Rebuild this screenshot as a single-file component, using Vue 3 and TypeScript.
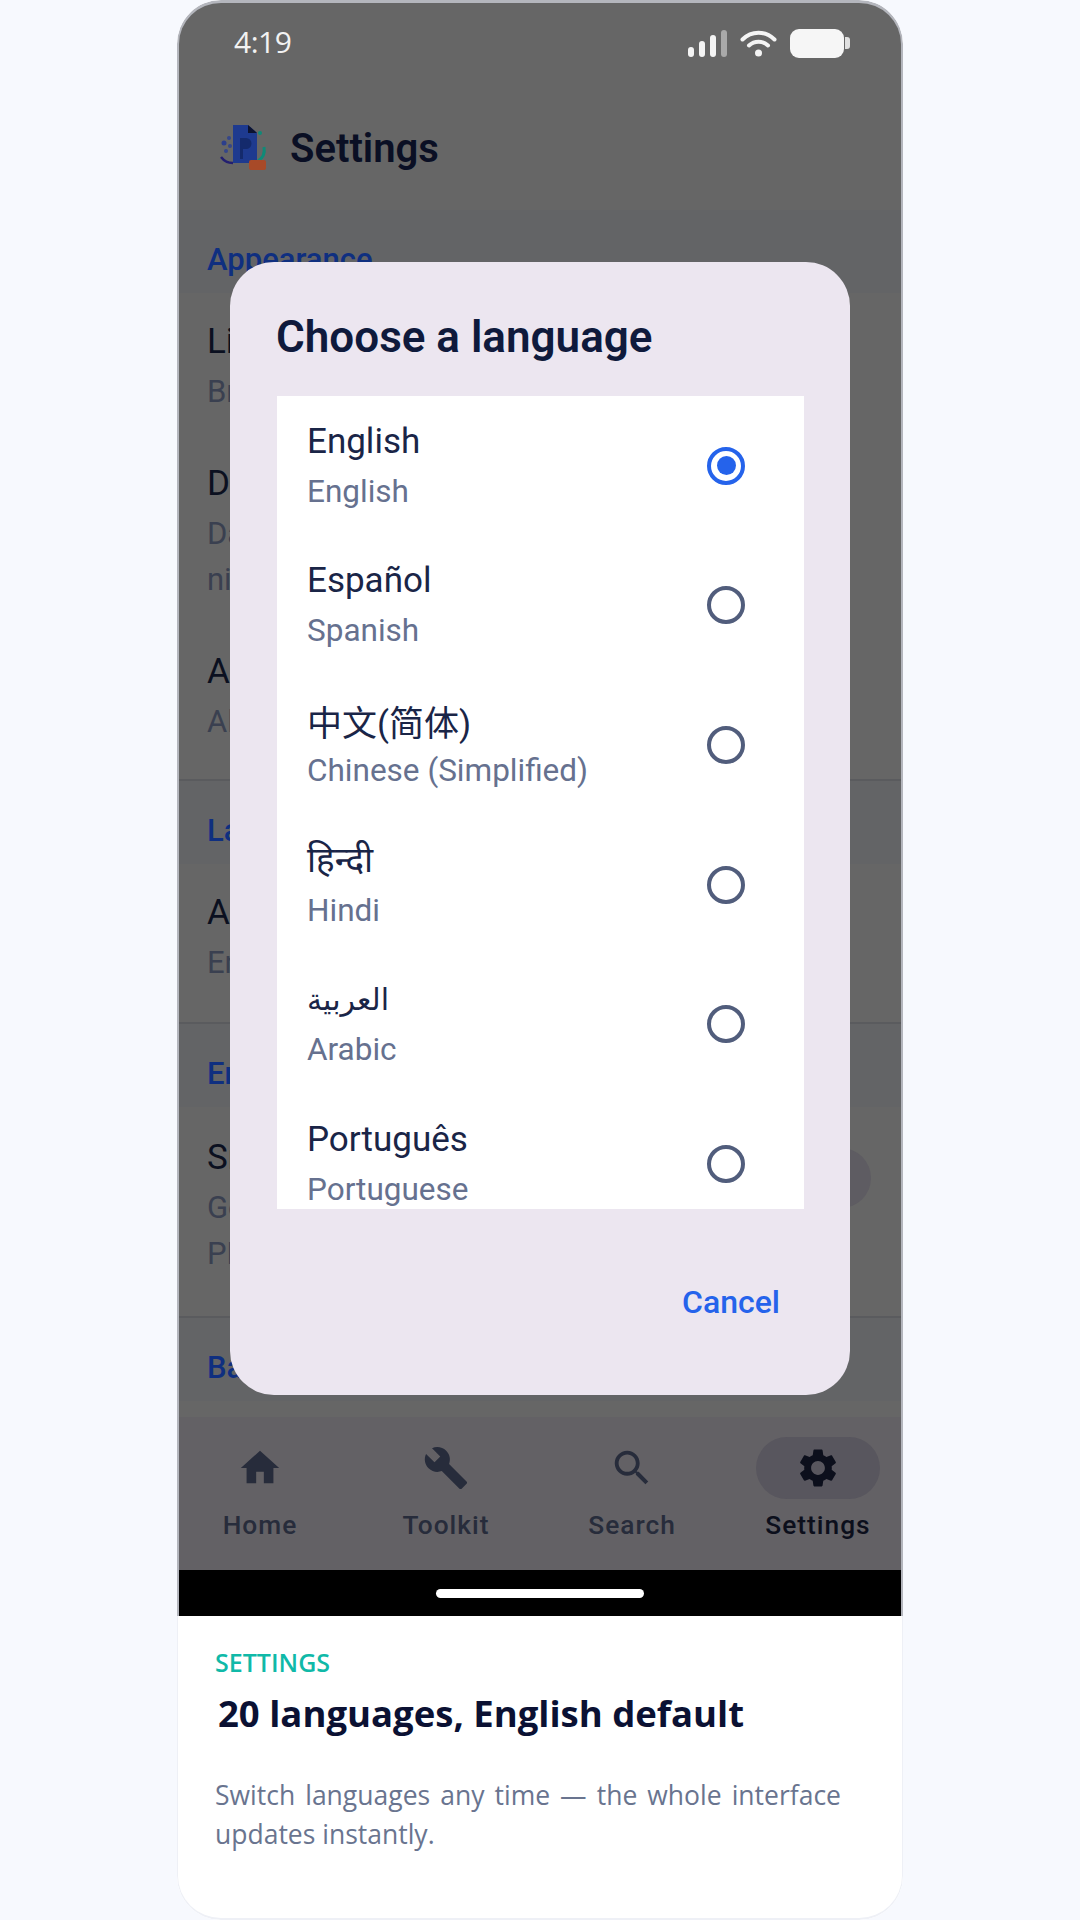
<template>
  <div class="page">
    <div class="phone">
      <div class="screen">
        <div class="status">
          <span class="time">4:19</span>
          <div class="status-icons">
            <svg width="39" height="27" viewBox="0 0 39 27">
              <rect x="0" y="17" width="6" height="10" rx="3" fill="#f4f4f4" />
              <rect x="11" y="11" width="6" height="16" rx="3" fill="#f4f4f4" />
              <rect x="22" y="5" width="6" height="22" rx="3" fill="#f4f4f4" />
              <rect x="33" y="0" width="6" height="27" rx="3" fill="#a9a9a9" />
            </svg>
            <svg width="37" height="27" viewBox="0 0 37 27" fill="none" stroke="#f4f4f4" stroke-width="4" stroke-linecap="round">
              <path d="M2.5 9.5C11.5 .5 25.500 .5 34.500 9.500" />
              <path d="M9 15.500C14.500 10.500 22.500 10.500 28 15.500" />
              <circle cx="18.500" cy="23" r="3.500" fill="#f4f4f4" stroke="none" />
            </svg>
            <div class="battery"></div>
          </div>
        </div>

        <header class="app-bar">
          <svg class="logo" width="50" height="46" viewBox="0 0 50 46">
            <path d="M13 1h15l9 8v30H13z" fill="#1e3a8f" />
            <path d="M28 1l9 8h-9z" fill="#0c1330" />
            <path d="M20 14h6a5 5 0 0 1 0 11h-3v10h-3z" fill="#142a6c" />
            <circle cx="9" cy="14" r="2" fill="#35468a" />
            <circle cx="4" cy="19" r="2.500" fill="#2c3f8c" />
            <circle cx="10" cy="22" r="2" fill="#35468a" />
            <circle cx="6" cy="27" r="2" fill="#35468a" />
            <path d="M1 33c3 4 7 6 12 6" fill="none" stroke="#231f70" stroke-width="2.500" />
            <path d="M44 23c1 6-1 11-6 14" fill="none" stroke="#0f8a78" stroke-width="3" />
            <circle cx="40" cy="9" r="2" fill="#0f8a78" />
            <rect x="29" y="36" width="17" height="10" rx="2" fill="#a84a28" />
          </svg>
          <span class="app-title">Settings</span>
        </header>

        <div class="content">
          <section v-for="section in sections" :key="section.title" class="section">
            <h3 class="section-title">{{ section.title }}</h3>
            <div
              v-for="row in section.rows"
              :key="row.title"
              class="row"
              :class="{ 'row-switch': row.toggle }"
            >
              <div>
                <div class="row-title">{{ row.title }}</div>
                <div class="row-sub">{{ row.sub }}</div>
              </div>
              <span v-if="row.toggle" class="switch"></span>
            </div>
          </section>
        </div>

        <nav class="nav">
          <div v-for="tab in tabs" :key="tab.label" class="tab" :class="{ active: tab.active }">
            <span class="tab-icon">
              <svg width="46" height="46" viewBox="0 0 24 24"><path :d="tab.icon" /></svg>
            </span>
            <span class="tab-label">{{ tab.label }}</span>
          </div>
        </nav>

        <div class="gesture"><span class="gesture-pill"></span></div>
      </div>

      <div class="caption">
        <div class="eyebrow">SETTINGS</div>
        <h2 class="caption-title">20 languages, English default</h2>
        <p class="caption-text">Switch languages any time — the whole interface updates instantly.</p>
      </div>

      <div class="dialog">
        <h2 class="dialog-title">Choose a language</h2>
        <div class="lang-list">
          <div v-for="(lang, i) in languages" :key="lang.en" class="lang">
            <div class="lang-text">
              <div class="lang-name" :class="lang.cls">{{ lang.name }}</div>
              <div class="lang-en">{{ lang.en }}</div>
            </div>
            <span class="radio" :class="{ checked: i === selected }"></span>
          </div>
        </div>
        <div class="dialog-actions">
          <span class="cancel">Cancel</span>
        </div>
      </div>
    </div>
  </div>
</template>

<script setup lang="ts">
import { ref } from "vue";

interface Row {
  title: string;
  sub: string;
  toggle?: boolean;
}

const selected = ref(0);

// everything behind the dialog is mostly covered, only the first letters show
const sections: { title: string; rows: Row[] }[] = [
  {
    title: "Appearance",
    rows: [
      { title: "Light", sub: "Bright theme" },
      { title: "Dark", sub: "Dark theme, easier on the eyes at\nnight" },
      { title: "Auto", sub: "Always follow the system" },
    ],
  },
  {
    title: "Language",
    rows: [{ title: "App language", sub: "English" }],
  },
  {
    title: "Engine",
    rows: [{ title: "Smart engine", sub: "Get the best results on every\nPDF", toggle: true }],
  },
  { title: "Backup", rows: [] },
];

const tabs = [
  { label: "Home", icon: "M10 20v-6h4v6h5v-8h3L12 3 2 12h3v8z" },
  {
    label: "Toolkit",
    icon: "M22.7 19l-9.1-9.1c.9-2.3.4-5-1.5-6.9-2-2-5-2.4-7.4-1.3L9 6 6 9 1.600 4.700C.4 7.100.9 10.100 2.900 12.100c1.900 1.900 4.600 2.400 6.900 1.500l9.100 9.100c.4.4 1 .4 1.400 0l2.300-2.300c.5-.4.5-1.100.1-1.400z",
  },
  {
    label: "Search",
    icon: "M15.500 14h-.79l-.28-.27C15.410 12.590 16 11.110 16 9.500 16 5.910 13.090 3 9.500 3S3 5.910 3 9.500 5.910 16 9.500 16c1.610 0 3.090-.59 4.230-1.570l.27.28v.79l5 4.990L20.490 19l-4.990-5zm-6 0C7.010 14 5 11.990 5 9.500S7.010 5 9.500 5 14 7.010 14 9.500 11.990 14 9.500 14z",
  },
  {
    label: "Settings",
    active: true,
    icon: "M19.140 12.940c.04-.3.06-.61.06-.94 0-.32-.02-.64-.07-.94l2.030-1.580c.18-.14.23-.41.12-.61l-1.920-3.320c-.12-.22-.37-.29-.59-.22l-2.390.96c-.5-.38-1.030-.7-1.620-.94l-.36-2.540c-.04-.24-.24-.41-.48-.41h-3.840c-.24 0-.43.17-.47.41l-.36 2.540c-.59.24-1.130.57-1.620.94l-2.390-.96c-.22-.08-.47 0-.59.22L2.740 8.870c-.12.21-.08.47.12.61l2.030 1.580c-.05.3-.09.63-.09.94s.02.64.07.94l-2.030 1.580c-.18.14-.23.41-.12.61l1.920 3.320c.12.22.37.29.59.22l2.390-.96c.5.38 1.030.7 1.620.94l.36 2.540c.05.24.24.41.48.41h3.840c.24 0 .44-.17.47-.41l.36-2.540c.59-.24 1.130-.56 1.620-.94l2.390.96c.22.08.47 0 .59-.22l1.920-3.320c.12-.22.07-.47-.12-.61l-2.010-1.580zM12 15.600c-1.980 0-3.600-1.620-3.600-3.600s1.620-3.600 3.600-3.600 3.600 1.620 3.600 3.600-1.620 3.600-3.600 3.600z",
  },
];

const languages = [
  { name: "English", en: "English" },
  { name: "Español", en: "Spanish" },
  { name: "中文(简体)", en: "Chinese (Simplified)", cls: "cjk" },
  { name: "हिन्दी", en: "Hindi" },
  { name: "العربية", en: "Arabic", cls: "arabic" },
  { name: "Português", en: "Portuguese" },
];
</script>

<style>
body {
  margin: 0;
  background: #f7f9fe;
}
</style>

<style scoped>
.page {
  width: 1080px;
  height: 1920px;
  display: flex;
  justify-content: center;
  background: #f7f9fe;
  font-family: Roboto, "Noto Sans CJK SC", "Noto Sans", "DejaVu Sans", sans-serif;
}

.phone {
  position: relative;
  width: 726px;
  height: 1920px;
  display: flex;
  flex-direction: column;
  background: #fff;
  border-radius: 44px;
  overflow: hidden;
}

/* colours below are already dimmed, the sheet is open over them */
.screen {
  box-sizing: border-box;
  height: 1616px;
  flex: none;
  display: flex;
  flex-direction: column;
  background: #666;
  border: solid #b4b6bd;
  border-width: 3px 2px 0;
  border-radius: 44px 44px 0 0;
}

.status {
  height: 81px;
  flex: none;
  display: flex;
  align-items: center;
  justify-content: space-between;
  padding: 0 51px 0 55px;
}

.time {
  margin-top: -4px;
  color: #f2f2f2;
  font: 400 30px "Open Sans", sans-serif;
  letter-spacing: -0.5px;
}

.status-icons {
  display: flex;
  align-items: center;
  gap: 13px;
}

.battery {
  position: relative;
  width: 54px;
  height: 29px;
  margin-right: 6px;
  border-radius: 9px;
  background: #f6f6f6;
}

.battery::after {
  content: "";
  position: absolute;
  left: 55px;
  top: 8px;
  width: 5px;
  height: 12px;
  border-radius: 0 3px 3px 0;
  background: #e0e0e0;
}

.app-bar {
  height: 126px;
  flex: none;
  display: flex;
  align-items: center;
  gap: 20px;
  padding-left: 41px;
}

.app-title {
  margin-top: 2px;
  color: #0a0f24;
  font-size: 40px;
  font-weight: 600;
}

.content {
  flex: 1;
  min-height: 0;
  overflow: hidden;
}

.section {
  padding-bottom: 16px;
  border-bottom: 2px solid #5a5b5e;
}

.section:first-child {
  padding-bottom: 14px;
}

.section:last-child {
  border-bottom: 0;
}

.section-title {
  box-sizing: border-box;
  height: 83px;
  margin: 0;
  padding: 30px 0 0 28px;
  background: #636466;
  color: #0f2f80;
  font-size: 31px;
  font-weight: 500;
  line-height: 40px;
}

.row {
  display: flex;
  justify-content: space-between;
  padding: 28px 30px 20px 28px;
}

.row-switch {
  padding-top: 30px;
  padding-bottom: 23px;
}

.row-title {
  color: #0b1020;
  font-size: 35px;
  line-height: 42px;
}

.row-sub {
  margin-top: 6px;
  color: #3a4050;
  font-size: 31px;
  line-height: 46px;
  white-space: pre-line;
}

.switch {
  flex: none;
  width: 100px;
  height: 60px;
  margin-top: 11px;
  border-radius: 30px;
  background: #5e5c62;
}

.nav {
  height: 153px;
  flex: none;
  display: flex;
  justify-content: space-between;
  padding: 20px 21px 0 19px;
  box-sizing: border-box;
  background: #636165;
  color: #272c3b;
}

.tab {
  width: 124px;
  display: flex;
  flex-direction: column;
  align-items: center;
}

.tab-icon {
  width: 124px;
  height: 62px;
  display: flex;
  align-items: center;
  justify-content: center;
  border-radius: 31px;
}

.tab-icon svg {
  fill: currentColor;
}

.tab-label {
  margin-top: 11px;
  font-size: 26.300px;
  font-weight: 500;
  line-height: 30px;
  letter-spacing: 1px;
  white-space: nowrap;
}

.active {
  color: #0c0f1c;
}

.active .tab-icon {
  background: #58565e;
}

.gesture {
  height: 46px;
  flex: none;
  box-sizing: border-box;
  display: flex;
  justify-content: center;
  padding-top: 19px;
  background: #000;
}

.gesture-pill {
  width: 208px;
  height: 9px;
  border-radius: 5px;
  background: #fff;
}

.caption {
  box-sizing: border-box;
  flex: 1;
  padding: 29px 61px 0 37px;
  border: solid #eef0f6;
  border-width: 0 1px 2px;
  border-radius: 0 0 44px 44px;
}

.eyebrow {
  color: #10b9a8;
  font: 600 25px/34px "Open Sans", sans-serif;
}

.caption-title {
  margin: 12px 0 0 3px;
  color: #0b1133;
  font: 700 36.500px/44px "Open Sans", sans-serif;
}

.caption-text {
  margin: 41px 0 0;
  color: #69748f;
  font: 400 26.500px/39px "Open Sans", sans-serif;
  text-align: justify;
}

.dialog {
  position: absolute;
  left: 53px;
  top: 262px;
  box-sizing: border-box;
  width: 620px;
  height: 1133px;
  padding: 50px 46px 0 47px;
  border-radius: 44px;
  background: #ece6f0;
}

.dialog-title {
  margin: 0 0 34px -1px;
  color: #0f1a3c;
  font-size: 44px;
  font-weight: 600;
  line-height: 50px;
}

.lang-list {
  height: 813px;
  overflow: hidden;
  background: #fff;
}

.lang {
  box-sizing: border-box;
  height: 139.6px;
  display: flex;
  align-items: center;
  justify-content: space-between;
  padding: 0 59px 0 30px;
}

.lang-text {
  padding-top: 2px;
}

.lang-name {
  color: #1a2547;
  font-size: 35px;
  line-height: 48px;
}

.lang-name.arabic {
  font-size: 30px;
}

/* the CJK face sits higher in its line than Roboto does */
.lang-name.cjk {
  padding-top: 4px;
  margin-bottom: -4px;
}

.lang-en {
  margin-top: 2px;
  color: #66718f;
  font-size: 31.500px;
  line-height: 48px;
}

.radio {
  box-sizing: border-box;
  width: 38px;
  height: 38px;
  display: flex;
  align-items: center;
  justify-content: center;
  border: 4px solid #515d7c;
  border-radius: 50%;
}

.radio.checked {
  border-color: #2563eb;
}

.radio.checked::after {
  content: "";
  width: 19px;
  height: 19px;
  border-radius: 50%;
  background: #2563eb;
}

.dialog-actions {
  display: flex;
  justify-content: flex-end;
  margin-top: 73px;
  padding-right: 24px;
}

.cancel {
  color: #2563eb;
  font-size: 32px;
  font-weight: 500;
  line-height: 40px;
}
</style>
